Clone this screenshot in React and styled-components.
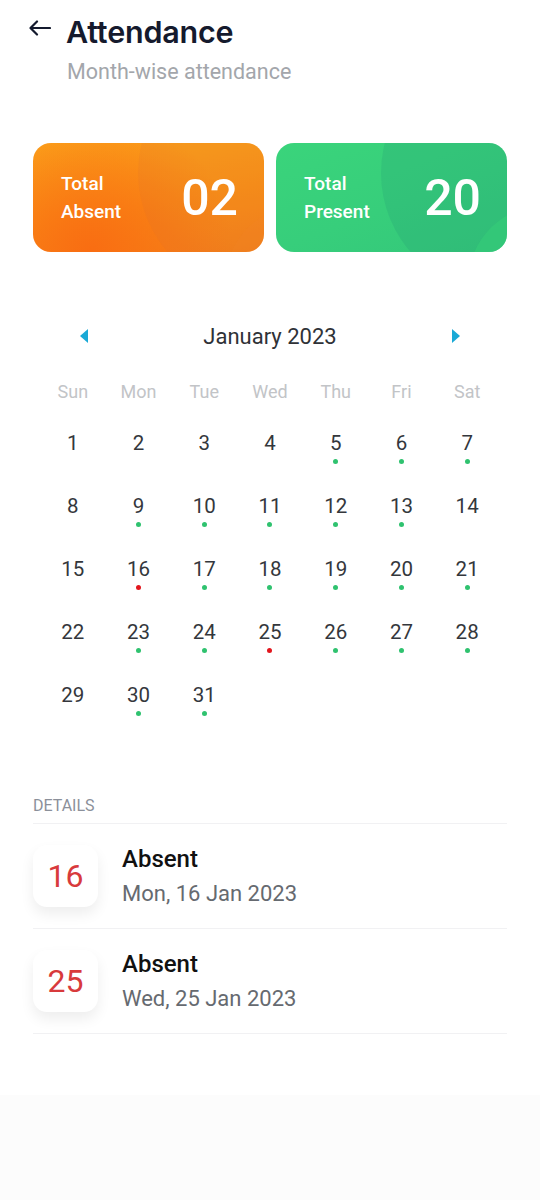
import React from "react";
import styled, { createGlobalStyle } from "styled-components";

const GlobalStyle = createGlobalStyle`
  html, body {
    margin: 0;
    padding: 0;
    background: #fcfcfc;
  }
  body {
    font-family: Roboto, "Noto Sans", sans-serif;
    -webkit-font-smoothing: antialiased;
  }
`;

const Page = styled.div`
  width: 540px;
  min-height: 1095px;
  background: #fff;
  box-sizing: border-box;
  padding: 13px 33px 40px;
`;

const Header = styled.div`
  display: flex;
  align-items: center;
  gap: 14px;
  margin-left: -5px;
`;

const BackButton = styled.button`
  border: none;
  background: none;
  padding: 0;
  width: 24px;
  height: 24px;
  display: flex;
  align-items: center;
  justify-content: center;
  color: #141a2e;
  cursor: pointer;
  margin-top: -8px;
`;

const Title = styled.h1`
  margin: 0;
  font-family: Inter, Roboto, sans-serif;
  font-weight: 600;
  font-size: 30.5px;
  line-height: 38px;
  color: #151a2d;
  letter-spacing: -0.2px;
`;

const Subtitle = styled.p`
  margin: 7px 0 0 34px;
  font-size: 21.5px;
  line-height: 28px;
  color: #a3a6ab;
`;

const Cards = styled.div`
  display: grid;
  grid-template-columns: 1fr 1fr;
  gap: 12px;
  margin-top: 57px;
`;

const StatCard = styled.div`
  position: relative;
  overflow: hidden;
  height: 109px;
  border-radius: 18px;
  display: flex;
  align-items: center;
  justify-content: space-between;
  padding: 0 26px 0 28px;
  color: #fff;
  background: ${(p) =>
    p.$tone === "orange"
      ? "radial-gradient(circle at 25% 100%, #f96d12 0%, rgba(249, 112, 18, 0) 70%), linear-gradient(170deg, #fba51b 0%, #f99016 55%, #f38019 100%)"
      : "linear-gradient(160deg, #3ad47b 0%, #37ce7b 55%, #34c77a 100%)"};

  &::before {
    content: "";
    position: absolute;
    left: 105px;
    top: -90px;
    width: 240px;
    height: 240px;
    border-radius: 50%;
    background: ${(p) =>
      p.$tone === "orange" ? "rgba(215, 110, 55, 0.12)" : "rgba(25, 125, 115, 0.15)"};
  }

  &::after {
    content: "";
    position: absolute;
    right: -117px;
    bottom: -109px;
    width: 156px;
    height: 156px;
    border-radius: 50%;
    background: ${(p) =>
      p.$tone === "orange" ? "rgba(240, 135, 45, 0.15)" : "rgba(55, 210, 120, 0.45)"};
  }
`;

const CardLabel = styled.div`
  position: relative;
  z-index: 1;
  font-size: 19px;
  line-height: 28px;
  font-weight: 500;
`;

const CardValue = styled.div`
  position: relative;
  z-index: 1;
  font-size: 50px;
  font-weight: 500;
  line-height: 56px;
`;

const Calendar = styled.div`
  margin: 70px 7px 0;
`;

const MonthBar = styled.div`
  display: flex;
  align-items: center;
  justify-content: space-between;
  padding: 0 40px;
  height: 28px;
`;

const Arrow = styled.button`
  border: none;
  background: none;
  padding: 0;
  width: 8px;
  height: 14px;
  display: flex;
  cursor: pointer;
`;

const MonthLabel = styled.div`
  font-size: 22px;
  color: #2f3237;
`;

const WeekRow = styled.div`
  display: grid;
  grid-template-columns: repeat(7, 1fr);
  margin-top: 30px;
  margin-bottom: 27px;
`;

const WeekDay = styled.div`
  text-align: center;
  font-size: 18px;
  line-height: 24px;
  color: #c2c4c7;
`;

const DayGrid = styled.div`
  display: grid;
  grid-template-columns: repeat(7, 1fr);
  grid-auto-rows: 63px;
`;

const DayCell = styled.div`
  display: flex;
  flex-direction: column;
  align-items: center;
`;

const DayNumber = styled.span`
  font-size: 20.5px;
  line-height: 24px;
  color: #34373c;
`;

const Dot = styled.span`
  width: 5px;
  height: 5px;
  border-radius: 50%;
  margin-top: 4px;
  background: ${(p) => (p.$status === "absent" ? "#e2161d" : "#2fc26f")};
`;

const Details = styled.section`
  margin-top: 50px;
`;

const SectionLabel = styled.div`
  font-size: 16px;
  line-height: 20px;
  color: #8b909a;
  padding-bottom: 7px;
  border-bottom: 1px solid #f1f1f3;
`;

const DetailRow = styled.div`
  display: flex;
  align-items: center;
  gap: 24px;
  padding: 21px 0;
  border-bottom: 1px solid #f1f1f3;
`;

const DateBox = styled.div`
  width: 65px;
  height: 62px;
  border-radius: 14px;
  background: #fff;
  box-shadow: 0 7px 14px rgba(0, 0, 0, 0.07);
  display: flex;
  align-items: center;
  justify-content: center;
  font-size: 32px;
  color: #d83a3c;
`;

const DetailText = styled.div`
  display: flex;
  flex-direction: column;
  gap: 8px;
`;

const DetailTitle = styled.div`
  font-size: 24px;
  line-height: 28px;
  font-weight: 500;
  color: #111;
`;

const DetailDate = styled.div`
  font-size: 22px;
  line-height: 26px;
  color: #666a70;
`;

const weekDays = ["Sun", "Mon", "Tue", "Wed", "Thu", "Fri", "Sat"];
const absent = [16, 25];
const present = [5, 6, 7, 9, 10, 11, 12, 13, 17, 18, 19, 20, 21, 23, 24, 26, 27, 28, 30, 31];

const absences = [
  { day: 16, label: "Mon, 16 Jan 2023" },
  { day: 25, label: "Wed, 25 Jan 2023" },
];

function Triangle({ dir }) {
  return (
    <svg width="8" height="14" viewBox="0 0 8 14">
      {dir === "left" ? (
        <path d="M8 0 L0 7 L8 14 Z" fill="#1aa9d6" />
      ) : (
        <path d="M0 0 L8 7 L0 14 Z" fill="#1aa9d6" />
      )}
    </svg>
  );
}

function App() {
  const days = Array.from({ length: 31 }, (_, i) => i + 1);

  return (
    <>
      <GlobalStyle />
      <Page>
        <Header>
          <BackButton aria-label="Back">
            <svg width="22" height="16" viewBox="0 0 22 16" fill="none">
              <path
                d="M21 8 H2 M8 1.5 L1.5 8 L8 14.5"
                stroke="currentColor"
                strokeWidth="2.2"
                strokeLinecap="round"
                strokeLinejoin="round"
              />
            </svg>
          </BackButton>
          <Title>Attendance</Title>
        </Header>
        <Subtitle>Month-wise attendance</Subtitle>

        <Cards>
          <StatCard $tone="orange">
            <CardLabel>
              Total
              <br />
              Absent
            </CardLabel>
            <CardValue>02</CardValue>
          </StatCard>
          <StatCard $tone="green">
            <CardLabel>
              Total
              <br />
              Present
            </CardLabel>
            <CardValue>20</CardValue>
          </StatCard>
        </Cards>

        <Calendar>
          <MonthBar>
            <Arrow aria-label="Previous month">
              <Triangle dir="left" />
            </Arrow>
            <MonthLabel>January 2023</MonthLabel>
            <Arrow aria-label="Next month">
              <Triangle dir="right" />
            </Arrow>
          </MonthBar>

          <WeekRow>
            {weekDays.map((d) => (
              <WeekDay key={d}>{d}</WeekDay>
            ))}
          </WeekRow>

          <DayGrid>
            {days.map((d) => (
              <DayCell key={d}>
                <DayNumber>{d}</DayNumber>
                {absent.includes(d) && <Dot $status="absent" />}
                {present.includes(d) && <Dot $status="present" />}
              </DayCell>
            ))}
          </DayGrid>
        </Calendar>

        <Details>
          <SectionLabel>DETAILS</SectionLabel>
          {absences.map((a) => (
            <DetailRow key={a.day}>
              <DateBox>{a.day}</DateBox>
              <DetailText>
                <DetailTitle>Absent</DetailTitle>
                <DetailDate>{a.label}</DetailDate>
              </DetailText>
            </DetailRow>
          ))}
        </Details>
      </Page>
    </>
  );
}

export default App;
